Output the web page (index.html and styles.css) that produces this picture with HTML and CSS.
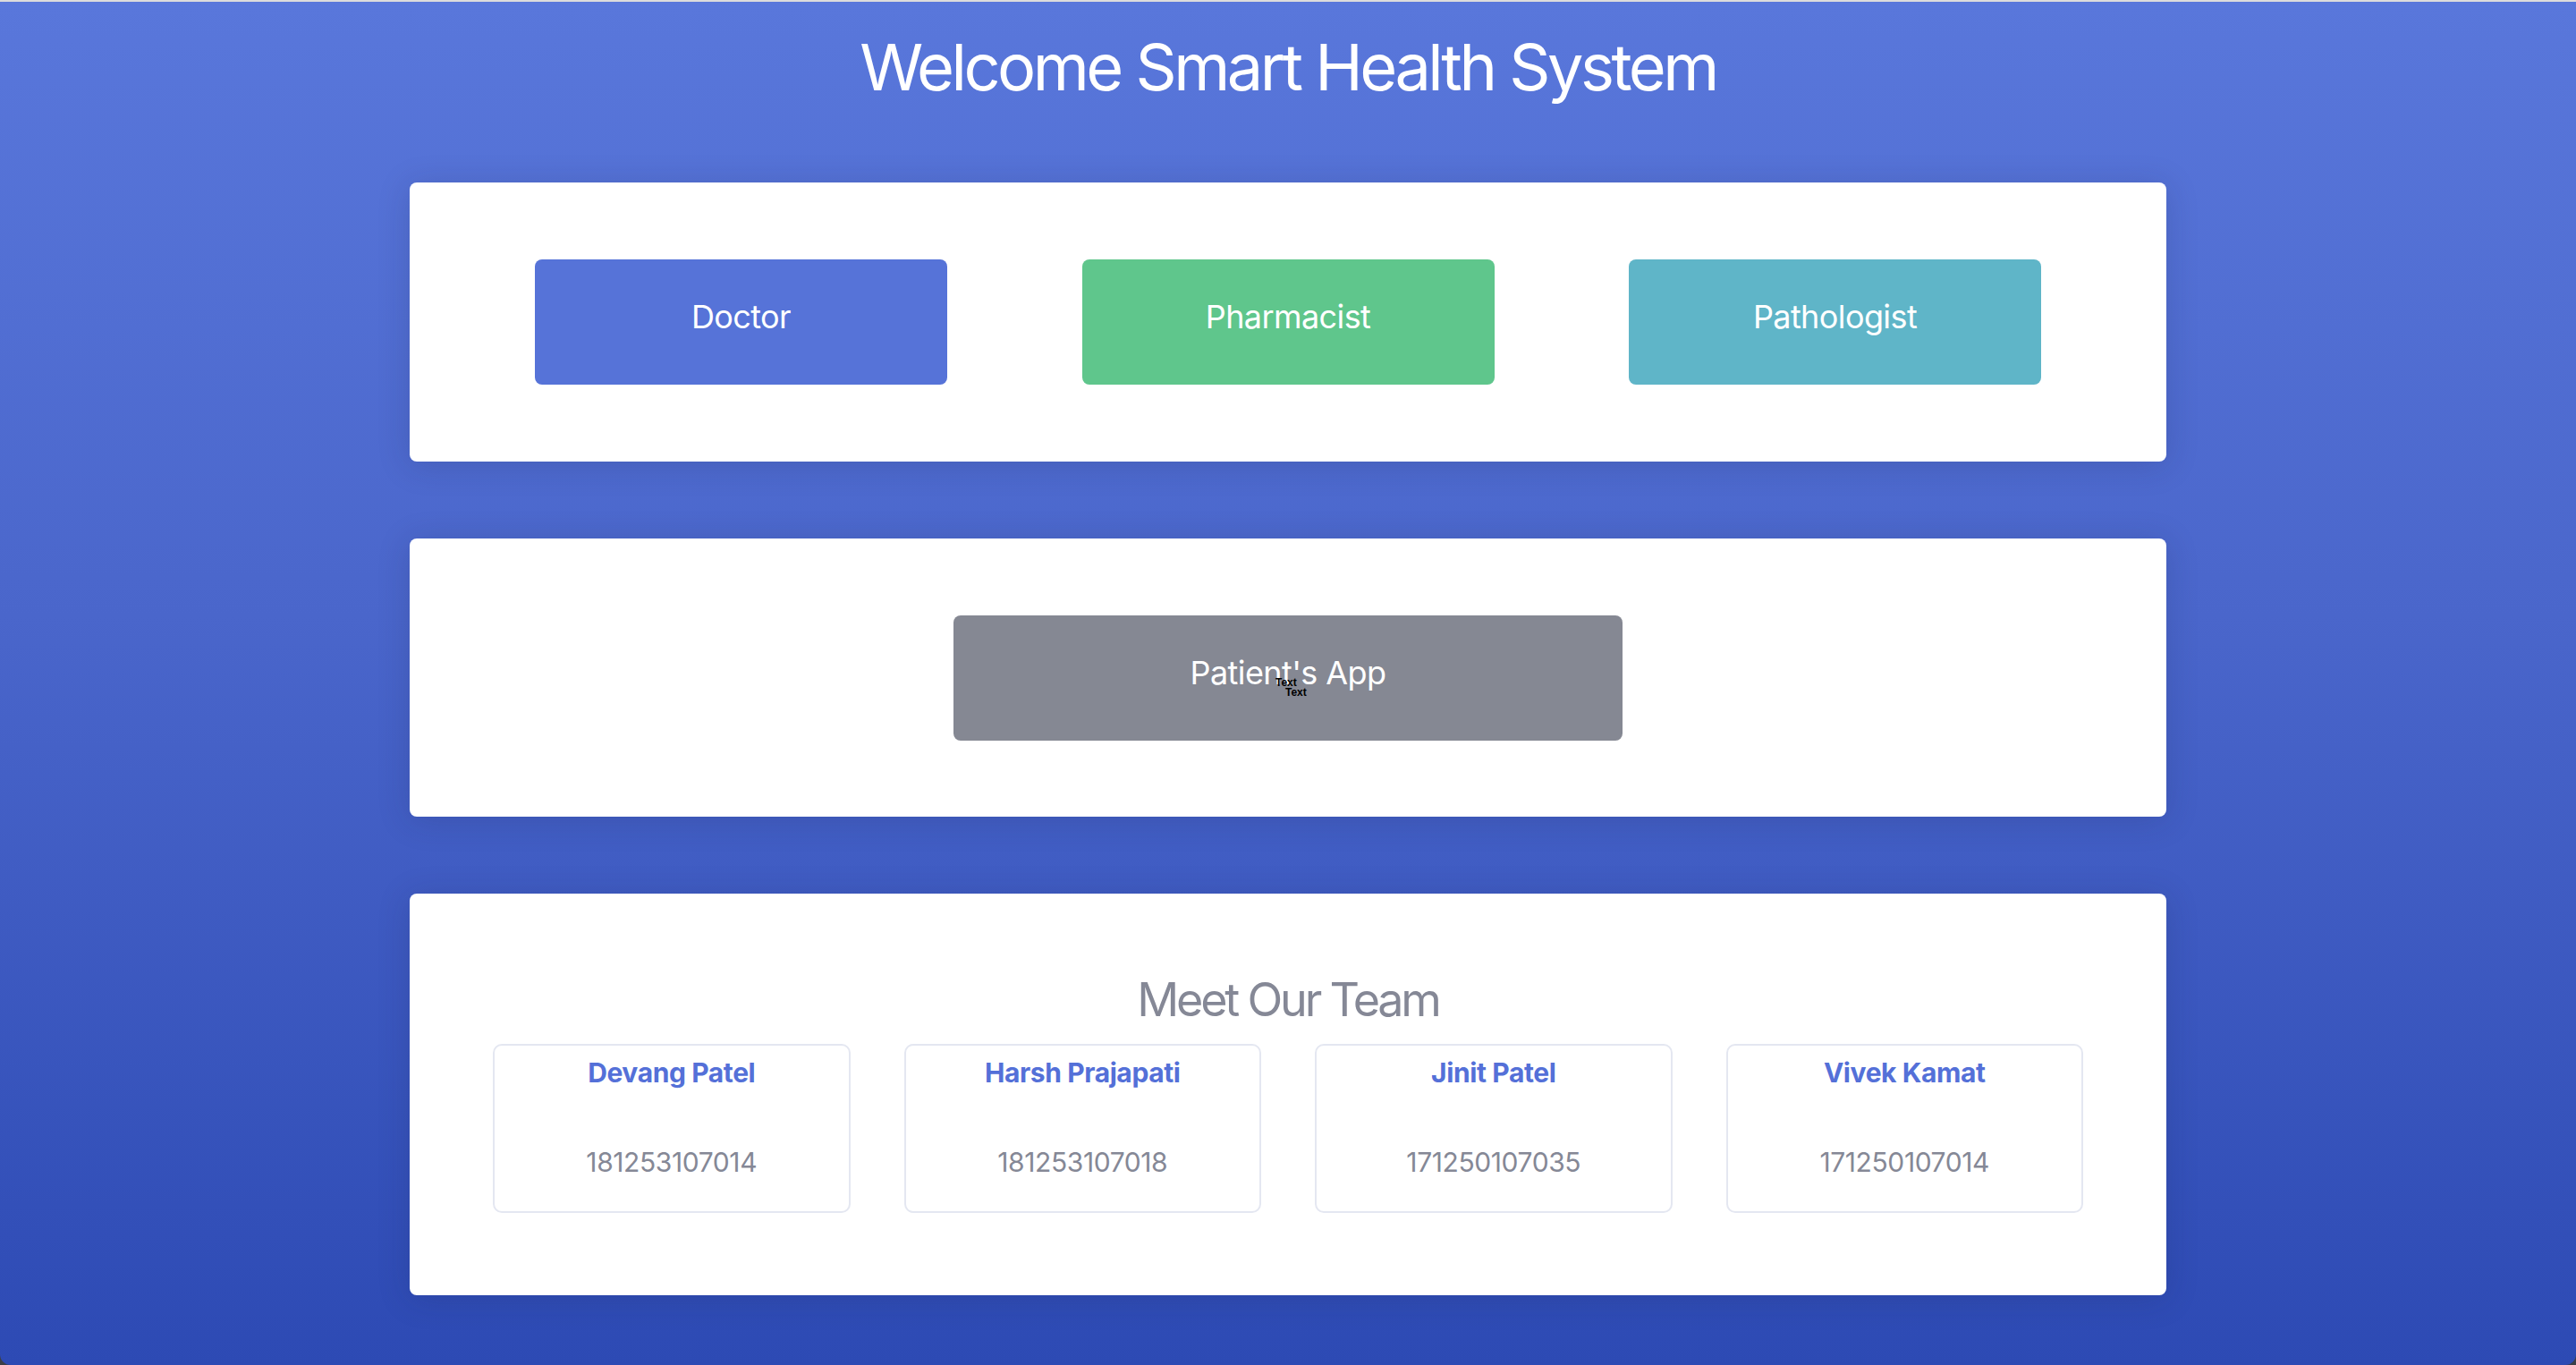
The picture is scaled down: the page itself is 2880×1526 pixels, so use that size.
FILE: index.html
```html
<!DOCTYPE html>
<html lang="en">
<head>
<meta charset="utf-8">
<title>Welcome Smart Health System</title>
<link rel="stylesheet" href="styles.css">
</head>
<body>
<div class="page">
  <h1 class="title">Welcome Smart Health System</h1>

  <section class="card card-roles">
    <a class="btn btn-doctor" href="#">Doctor</a>
    <a class="btn btn-pharma" href="#">Pharmacist</a>
    <a class="btn btn-patho" href="#">Pathologist</a>
  </section>

  <section class="card card-patient">
    <a class="btn btn-patient" href="#">Patient's App
      <span class="tag tag-one">Text</span>
      <span class="tag tag-two">Text</span>
    </a>
  </section>

  <section class="card card-team">
    <h2 class="team-title">Meet Our Team</h2>
    <div class="team-grid">
      <div class="member">
        <h3 class="member-name">Devang Patel</h3>
        <p class="member-id">181253107014</p>
      </div>
      <div class="member">
        <h3 class="member-name">Harsh Prajapati</h3>
        <p class="member-id">181253107018</p>
      </div>
      <div class="member">
        <h3 class="member-name">Jinit Patel</h3>
        <p class="member-id">171250107035</p>
      </div>
      <div class="member">
        <h3 class="member-name">Vivek Kamat</h3>
        <p class="member-id">171250107014</p>
      </div>
    </div>
  </section>
</div>
</body>
</html>
```

FILE: styles.css
```css
* {
  box-sizing: border-box;
}

html {
  background: #3b3f48;
}

body {
  margin: 0;
  min-height: 100vh;
  font-family: "Inter", "Noto Sans", "Liberation Sans", sans-serif;
  background: linear-gradient(180deg, #5977db 0%, #4a66cb 45%, #2d4ab4 100%);
  border-top: 2px solid #dcdcdc;
  border-radius: 0 0 12px 12px;
}

.page {
  display: flex;
  flex-direction: column;
  align-items: center;
  gap: 86px;
  padding-top: 29px;
  padding-bottom: 77px;
}

.title {
  margin: 0;
  font-size: 72px;
  font-weight: 400;
  line-height: normal;
  color: #ffffff;
  letter-spacing: -3.5px;
}

.card {
  width: 1964px;
  background: #ffffff;
  border-radius: 8px;
  box-shadow: 0 4px 36px rgba(30, 35, 70, 0.18);
}

.card-roles {
  display: grid;
  grid-template-columns: repeat(3, 461px);
  justify-content: space-between;
  padding: 86px 140px;
}

.card-patient {
  display: flex;
  justify-content: center;
  padding: 86px 0 85px;
}

.btn {
  position: relative;
  display: flex;
  align-items: center;
  justify-content: center;
  height: 140px;
  padding-bottom: 13px;
  border-radius: 8px;
  color: #ffffff;
  font-size: 36px;
  letter-spacing: -0.6px;
  text-decoration: none;
}

.btn-doctor { background: #5673d8; }
.btn-pharma { background: #5fc68c; }
.btn-patho { background: #5fb5c8; }

.btn-patient {
  width: 748px;
  background: #858893;
}

.tag {
  position: absolute;
  font-family: "Liberation Sans", Arial, sans-serif;
  font-weight: 700;
  font-size: 12px;
  line-height: 14px;
  letter-spacing: 0;
  color: #000000;
}

.tag-one {
  left: 360px;
  top: 68px;
}

.tag-two {
  left: 371px;
  top: 79px;
}

.card-team {
  padding: 87px 93px 92px;
}

.team-title {
  margin: 0 0 18px;
  text-align: center;
  font-size: 52px;
  font-weight: 400;
  line-height: normal;
  color: #858896;
  letter-spacing: -3.2px;
}

.team-grid {
  display: grid;
  grid-template-columns: repeat(4, 1fr);
  gap: 60px;
}

.member {
  border: 2px solid #e4e7f1;
  border-radius: 10px;
  padding: 12px 10px 37px;
  text-align: center;
  height: 189px;
}

.member-name {
  margin: 0;
  font-size: 30px;
  font-weight: 700;
  line-height: normal;
  letter-spacing: -0.4px;
  color: #5470d8;
}

.member-id {
  margin: 64px 0 0;
  font-size: 30px;
  font-weight: 400;
  line-height: normal;
  letter-spacing: -0.4px;
  color: #858896;
}
```
